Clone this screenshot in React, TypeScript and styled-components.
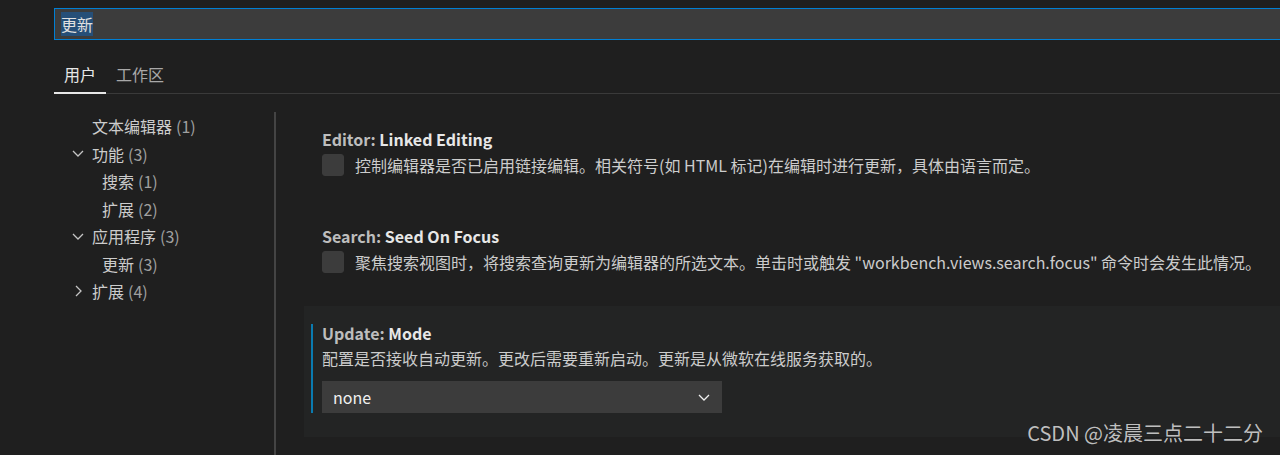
import React from 'react';
import styled, { createGlobalStyle } from 'styled-components';

const GlobalStyle = createGlobalStyle`
  html, body {
    margin: 0;
    padding: 0;
    background: #1f1f1f;
    overflow: hidden;
  }
  body {
    font-family: "Noto Sans CJK SC", "Noto Sans", sans-serif;
    color: #cccccc;
  }
`;

const Page = styled.div`
  position: relative;
  height: 455px;
  padding: 8px 0 0 54px;
  box-sizing: border-box;
  overflow: hidden;
`;

const SearchBox = styled.div`
  height: 32px;
  box-sizing: border-box;
  width: calc(100% + 20px);
  background: #3c3c3c;
  border: 1px solid #007fd4;
  padding: 3px 6px;
  display: flex;
  align-items: center;
`;

const Selected = styled.span`
  background: #264f78;
  color: #e0e0e0;
  font-size: 16px;
  line-height: 24px;
`;

const TabBar = styled.div`
  margin-top: 16px;
  height: 38px;
  display: flex;
  box-shadow: inset 0 -1px 0 #3a3a3a;
`;

const Tab = styled.div<{ $active?: boolean }>`
  height: 38px;
  box-sizing: border-box;
  padding: 0 10px;
  line-height: 36px;
  font-size: 16px;
  color: ${p => (p.$active ? '#e7e7e7' : '#a8a8a8')};
  border-bottom: 2px solid ${p => (p.$active ? '#e7e7e7' : 'transparent')};
`;

const Body = styled.div`
  display: flex;
  height: 400px;
`;

const Toc = styled.div`
  width: 220px;
  padding-top: 18.5px;
  flex-shrink: 0;
`;

const TocRow = styled.div<{ $level: number }>`
  height: 27.5px;
  display: flex;
  align-items: center;
  padding-left: ${p => 38 + p.$level * 10}px;
  position: relative;
  font-size: 16px;
  white-space: nowrap;
`;

const Twistie = styled.span`
  position: absolute;
  left: 16px;
  top: 5px;
  width: 16px;
  height: 16px;
  display: flex;
  color: #c5c5c5;
`;

const Count = styled.span`
  color: #a0a0a0;
  margin-left: 4px;
`;

const Sash = styled.div`
  width: 2px;
  margin-top: 18px;
  background: #444444;
  flex-shrink: 0;
`;

const List = styled.div`
  flex: 1;
  margin-left: 28px;
  padding-top: 18px;
`;

const Item = styled.div<{ $focused?: boolean; $pb: number }>`
  padding: 16px 18px ${p => p.$pb}px 18px;
  background: ${p => (p.$focused ? '#232424' : 'transparent')};
  box-sizing: border-box;
`;

const ItemInner = styled.div<{ $focused?: boolean }>`
  position: relative;
  &::before {
    content: '';
    display: ${p => (p.$focused ? 'block' : 'none')};
    position: absolute;
    left: -11px;
    top: 2px;
    bottom: 0;
    width: 2px;
    background: #0a7bb0;
  }
`;

const Title = styled.div`
  font-size: 16px;
  line-height: 22px;
  font-weight: 600;
  color: #e7e7e7;
  white-space: nowrap;
`;

const Category = styled.span`
  color: #bdbdbd;
`;

const CheckRow = styled.div`
  display: flex;
  align-items: center;
  margin-top: 4px;
  gap: 11px;
`;

const Checkbox = styled.div`
  width: 22px;
  height: 22px;
  box-sizing: border-box;
  background: #3c3c3c;
  border: 1px solid #3c3c3c;
  border-radius: 3px;
  flex-shrink: 0;
`;

const Desc = styled.div<{ $mt?: number }>`
  font-size: 16px;
  line-height: 22px;
  margin-top: ${p => p.$mt ?? 0}px;
  color: #cccccc;
  white-space: nowrap;
`;

const Select = styled.div`
  margin-top: 12px;
  width: 400px;
  height: 32px;
  background: #3c3c3c;
  display: flex;
  align-items: center;
  justify-content: space-between;
  padding: 0 10px 0 11px;
  box-sizing: border-box;
  color: #f0f0f0;
  font-size: 16px;
`;

const Watermark = styled.div`
  position: absolute;
  right: 17px;
  bottom: 8px;
  font-size: 20px;
  color: rgba(220, 220, 220, 0.85);
  white-space: nowrap;
`;

const Chevron = ({ dir }: { dir: 'down' | 'right' }) => (
  <svg width="16" height="16" viewBox="0 0 16 16" fill="none">
    {dir === 'down' ? (
      <path d="M3 6l5 5 5-5" stroke="currentColor" strokeWidth="1.3" />
    ) : (
      <path d="M6 3l5 5-5 5" stroke="currentColor" strokeWidth="1.3" />
    )}
  </svg>
);

const toc: { label: string; count: number; level: number; twistie?: 'down' | 'right' }[] = [
  { label: '文本编辑器', count: 1, level: 0 },
  { label: '功能', count: 3, level: 0, twistie: 'down' },
  { label: '搜索', count: 1, level: 1 },
  { label: '扩展', count: 2, level: 1 },
  { label: '应用程序', count: 3, level: 0, twistie: 'down' },
  { label: '更新', count: 3, level: 1 },
  { label: '扩展', count: 4, level: 0, twistie: 'right' },
];

export default function App() {
  return (
    <>
      <GlobalStyle />
      <Page>
        <SearchBox>
          <Selected>更新</Selected>
        </SearchBox>
        <TabBar>
          <Tab $active>用户</Tab>
          <Tab>工作区</Tab>
        </TabBar>
        <Body>
          <Toc>
            {toc.map((t, i) => (
              <TocRow key={i} $level={t.level}>
                {t.twistie && (
                  <Twistie>
                    <Chevron dir={t.twistie} />
                  </Twistie>
                )}
                {t.label}
                <Count>({t.count})</Count>
              </TocRow>
            ))}
          </Toc>
          <Sash />
          <List>
            <Item $pb={33}>
              <ItemInner>
                <Title>
                  <Category>Editor: </Category>Linked Editing
                </Title>
                <CheckRow>
                  <Checkbox />
                  <Desc>控制编辑器是否已启用链接编辑。相关符号(如 HTML 标记)在编辑时进行更新，具体由语言而定。</Desc>
                </CheckRow>
              </ItemInner>
            </Item>
            <Item $pb={33}>
              <ItemInner>
                <Title>
                  <Category>Search: </Category>Seed On Focus
                </Title>
                <CheckRow>
                  <Checkbox />
                  <Desc>聚焦搜索视图时，将搜索查询更新为编辑器的所选文本。单击时或触发 "workbench.views.search.focus" 命令时会发生此情况。</Desc>
                </CheckRow>
              </ItemInner>
            </Item>
            <Item $focused $pb={24}>
              <ItemInner $focused>
                <Title>
                  <Category>Update: </Category>Mode
                </Title>
                <Desc $mt={3}>配置是否接收自动更新。更改后需要重新启动。更新是从微软在线服务获取的。</Desc>
                <Select>
                  none
                  <Chevron dir="down" />
                </Select>
              </ItemInner>
            </Item>
          </List>
        </Body>
        <Watermark>CSDN @凌晨三点二十二分</Watermark>
      </Page>
    </>
  );
}
